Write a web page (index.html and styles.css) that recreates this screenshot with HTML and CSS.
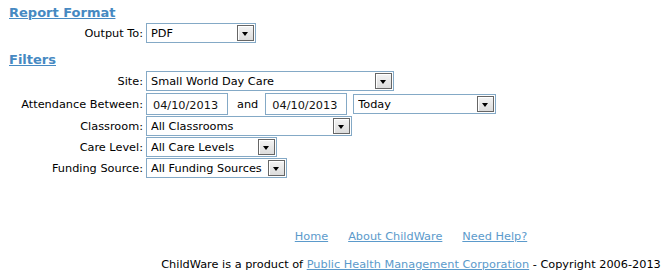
FILE: index.html
```html
<!DOCTYPE html>
<html lang="en">
<head>
    <meta charset="UTF-8">
    <meta name="viewport" content="width=device-width, initial-scale=1.0">
    <title>ChildWare - Attendance Report</title>
    <link rel="stylesheet" href="styles.css">
</head>
<body>
    <div class="page">
        <h2 class="section"><a href="#">Report Format</a></h2>
        <div class="row">
            <label class="label">Output To:</label>
            <div class="select w-output"><span class="value">PDF</span><span class="drop"></span></div>
        </div>

        <h2 class="section filters"><a href="#">Filters</a></h2>
        <div class="row">
            <label class="label">Site:</label>
            <div class="select w-site"><span class="value">Small World Day Care</span><span class="drop"></span></div>
        </div>
        <div class="row dates">
            <label class="label">Attendance Between:</label>
            <div class="controls">
                <input class="date" type="text" value="04/10/2013">
                <span class="and">and</span>
                <input class="date" type="text" value="04/10/2013">
                <div class="select w-range"><span class="value">Today</span><span class="drop"></span></div>
            </div>
        </div>
        <div class="row">
            <label class="label">Classroom:</label>
            <div class="select w-class"><span class="value">All Classrooms</span><span class="drop"></span></div>
        </div>
        <div class="row">
            <label class="label">Care Level:</label>
            <div class="select w-care"><span class="value">All Care Levels</span><span class="drop"></span></div>
        </div>
        <div class="row">
            <label class="label">Funding Source:</label>
            <div class="select w-fund"><span class="value">All Funding Sources</span><span class="drop"></span></div>
        </div>
    </div>

    <div class="footer">
        <div class="links">
            <a href="#">Home</a>
            <a href="#">About ChildWare</a>
            <a href="#">Need Help?</a>
        </div>
        <p class="copy">ChildWare is a product of <a href="#">Public Health Management Corporation</a> - Copyright 2006-2013</p>
    </div>
</body>
</html>
```

FILE: styles.css
```css
body {
    margin: 0;
    font-family: "DejaVu Sans", Verdana, sans-serif;
    font-size: 11.3px;
    color: #000;
    background: #fff;
}

.page {
    padding: 3px 8px 0 8px;
}

.section {
    margin: 0;
    font-size: 13px;
    font-weight: bold;
    line-height: 19px;
    padding-left: 1px;
}

.section a {
    color: #4689c2;
}

.filters {
    margin-top: 7px;
    padding-bottom: 1px;
}

.row {
    display: flex;
    align-items: center;
    gap: 3px;
    margin-top: 1px;
}

.row.dates {
    margin-top: 2px;
}

.label {
    width: 135px;
    text-align: right;
    flex-shrink: 0;
}

.controls {
    display: flex;
    align-items: center;
}

.select {
    display: flex;
    align-items: center;
    box-sizing: border-box;
    height: 20px;
    border: 1px solid #84a9c6;
    background: #fff;
    padding-left: 4px;
}

.value {
    flex: 1;
    white-space: nowrap;
    overflow: hidden;
}

.drop {
    position: relative;
    box-sizing: border-box;
    width: 17px;
    height: 16px;
    margin-right: 1px;
    border: 1px solid #666;
    box-shadow: inset 1px 1px 0 #fff;
    background: linear-gradient(#f4f4f4, #dcdcdc);
    flex-shrink: 0;
}

.drop::after {
    content: "";
    position: absolute;
    left: 4px;
    top: 6px;
    border-left: 3.5px solid transparent;
    border-right: 3.5px solid transparent;
    border-top: 4px solid #000;
}

.w-output { width: 110px; }
.w-site { width: 248px; }
.w-range { width: 143px; margin-left: 6px; }
.w-class { width: 206px; }
.w-care { width: 131px; }
.w-fund { width: 141px; }

.date {
    box-sizing: border-box;
    width: 82px;
    height: 22px;
    border: 1px solid #84a9c6;
    padding: 2px 0 0 6px;
    font-family: inherit;
    font-size: 11.3px;
    color: #111;
    margin: 0;
}

.and {
    padding: 0 7px 0 9px;
}

.footer {
    padding-left: 153px;
    text-align: center;
    margin-top: 52px;
}

.footer a {
    color: #5b9acb;
}

.links {
    display: flex;
    justify-content: center;
    gap: 20px;
}

.copy {
    margin: 15px 0 0 0;
}
```
